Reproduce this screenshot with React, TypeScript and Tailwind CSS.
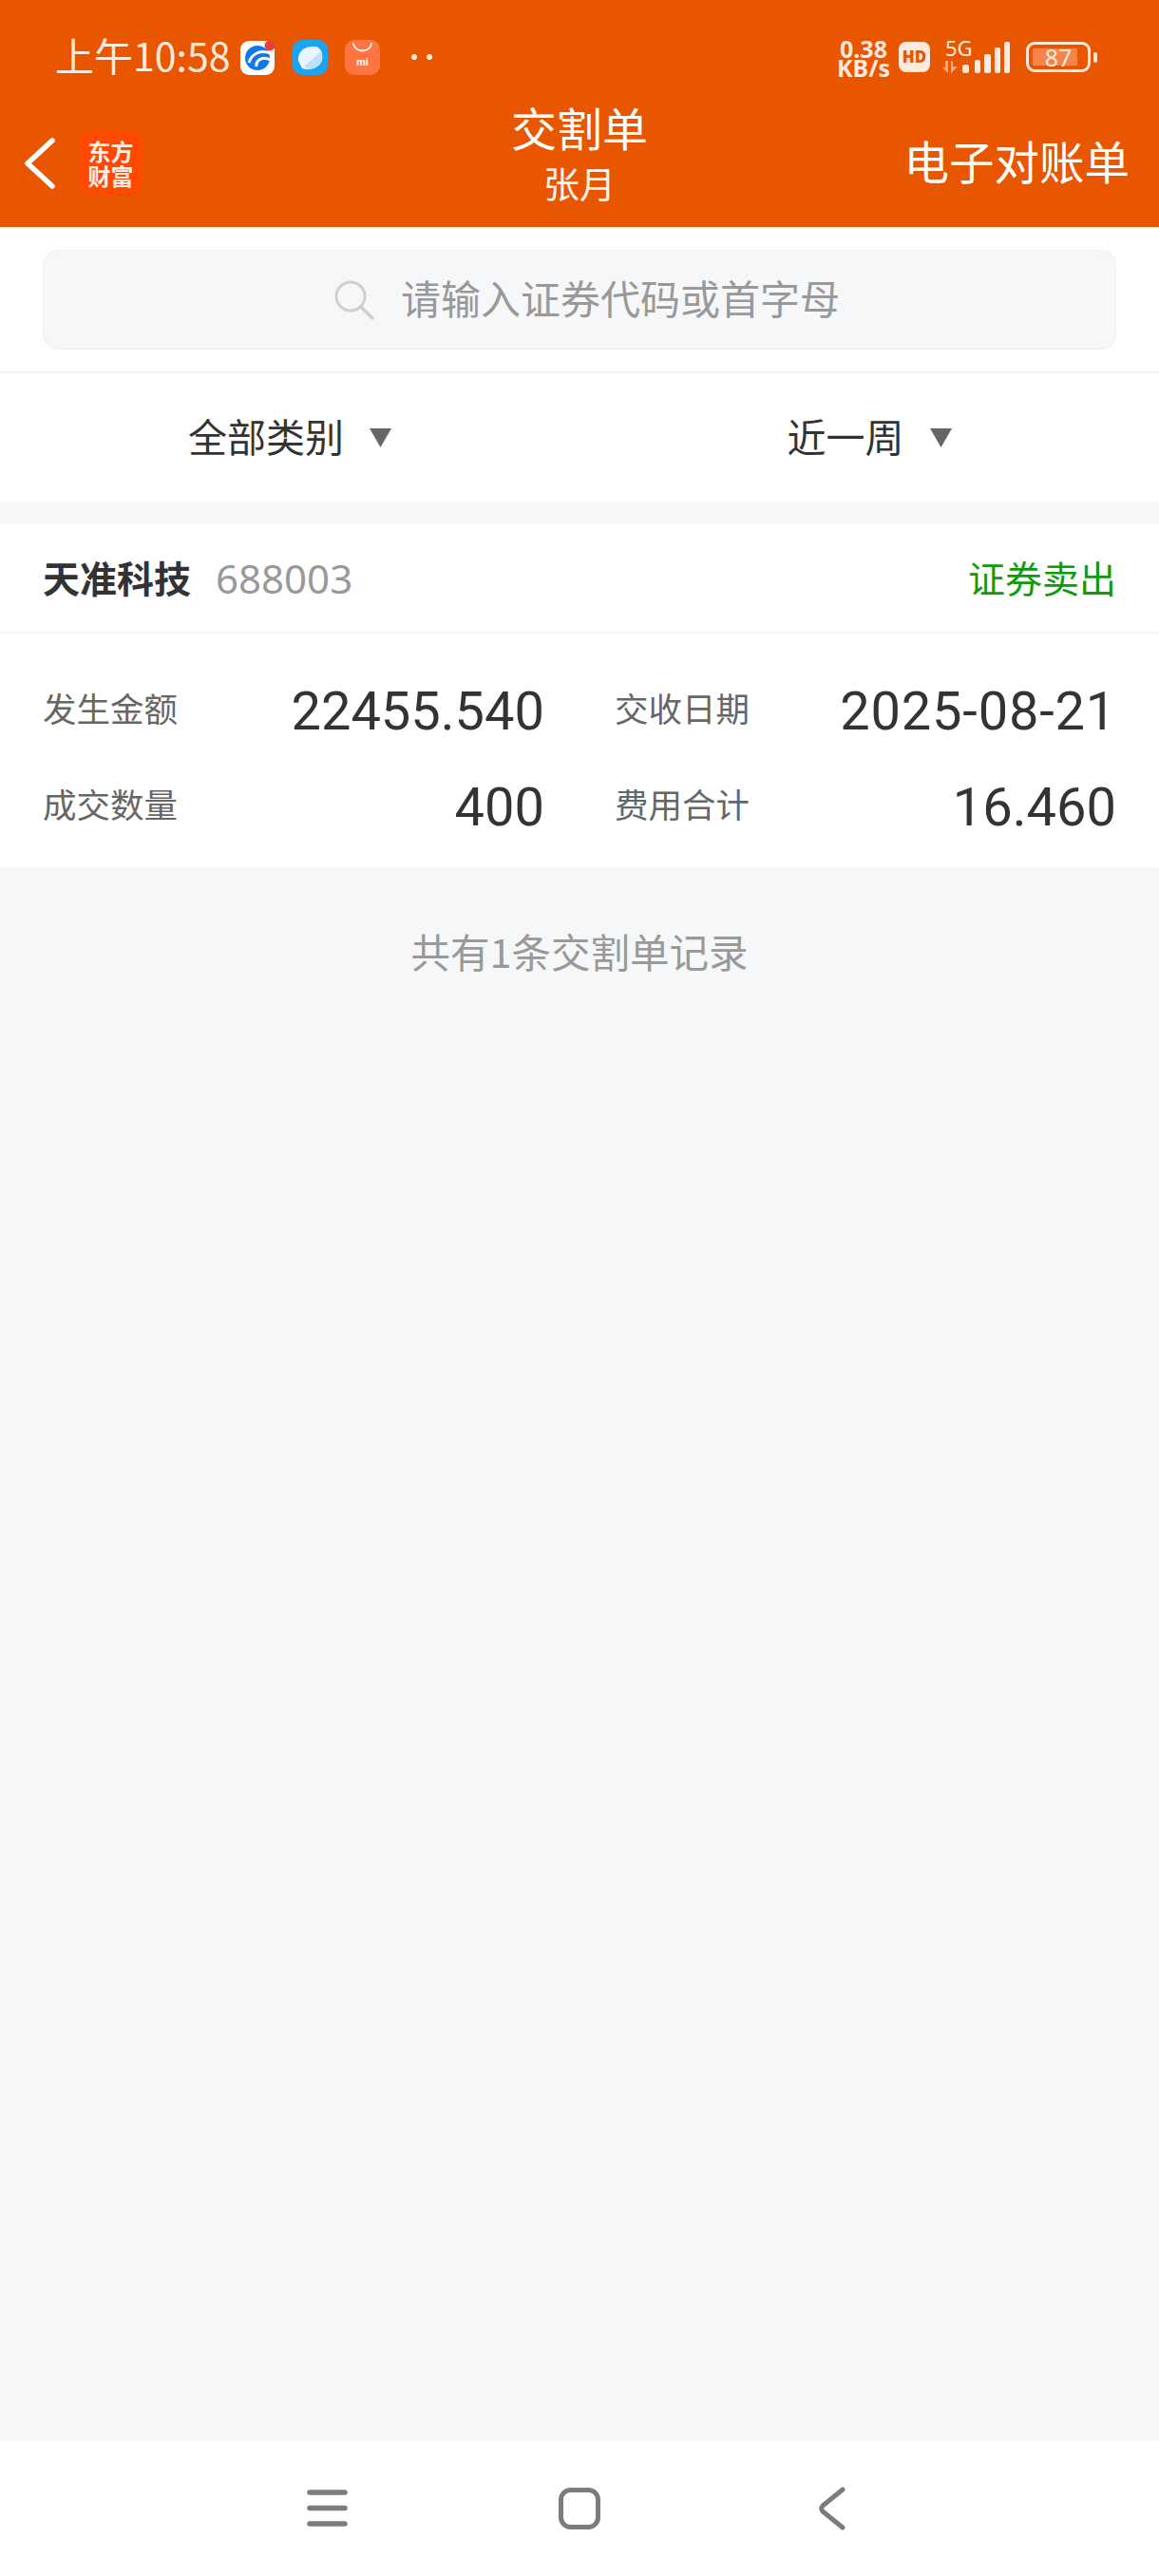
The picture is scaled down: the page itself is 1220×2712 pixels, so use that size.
function Row({ label, value, valueClass }: { label: string; value: string; valueClass?: string }) {
  return (
    <div className="flex items-center justify-between w-[528px] h-[64px]">
      <span className="text-[35.5px] leading-[48px] text-[#666666] mb-[6px]">{label}</span>
      <span className={"text-[56px] leading-[64px] mt-[2px] text-[#333333] font-['Roboto',sans-serif] " + (valueClass ?? "")}>{value}</span>
    </div>
  );
}

function StatusBar() {
  return (
    <div className="h-[118px] flex items-center justify-between pl-[58px] pr-[65px] pt-[2px] text-[#ffe9dc]">
      <div className="flex items-center">
        <span className="text-[41px] leading-[50px] mb-[6px] w-[186px] whitespace-nowrap">上午10:58</span>
        <svg width="38" height="37" viewBox="0 0 38 37" className="ml-[9px]">
          <rect width="36" height="36" y="1" rx="9" fill="#fff" />
          <circle cx="18" cy="19" r="13" fill="#1577e6" />
          <path d="M9 24C12 14 22 10 31 14M17 28C16 21 24 17 31 21" stroke="#fff" strokeWidth="3" fill="none" />
          <circle cx="31" cy="6" r="5.5" fill="#e5403a" />
        </svg>
        <svg width="37" height="37" viewBox="0 0 37 37" className="ml-[17px]">
          <rect width="37" height="37" rx="10" fill="#1ba4f4" />
          <path d="M6 22C5 12 13 6 24 7C30 8 32 14 31 21C29 29 19 33 10 30Z" fill="#eaf5ff" />
          <path d="M12 28L30 12C32 19 30 26 24 29C20 31 16 31 12 28Z" fill="#bfe0fa" />
        </svg>
        <svg width="37" height="37" viewBox="0 0 37 37" className="ml-[18px]">
          <rect width="37" height="37" rx="10" fill="#ff7442" />
          <path d="M9 4C11 14 26 14 28 4" stroke="#fff" strokeWidth="1.8" fill="none" strokeLinecap="round" />
          <text x="18.5" y="27" textAnchor="middle" fontSize="11" fontWeight="700" fill="#fff" fontFamily="Roboto, sans-serif">mi</text>
        </svg>
        <div className="ml-[33px] flex gap-[10px]">
          <span className="w-[6px] h-[6px] rounded-full bg-[#ffe9dc]" />
          <span className="w-[6px] h-[6px] rounded-full bg-[#ffe9dc]" />
        </div>
      </div>
      <div className="flex items-center">
        <div className="flex flex-col items-center w-[54px] text-[25px] leading-[20px] font-bold font-['Noto_Sans',sans-serif] mt-[2px]">
          <span>0.38</span>
          <span>KB/s</span>
        </div>
        <span className="ml-[10px] w-[33px] h-[32px] rounded-[8px] bg-[#ffe9dc] text-[#e85600] text-[17px] font-black leading-[32px] text-center font-['Noto_Sans',sans-serif]">HD</span>
        <div className="ml-[13px] relative w-[72px] h-[34px]">
          <span className="absolute left-[3px] -top-[6px] text-[22px] leading-[26px] font-['Noto_Sans',sans-serif]">5G</span>
          <svg width="16" height="13" viewBox="0 0 16 13" className="absolute left-0 bottom-0">
            <path d="M6 0V13L0 7H3V0ZM9 0H11V6H16L9 13Z" fill="#f7a77c" />
          </svg>
          <svg width="51" height="33" viewBox="0 0 51 33" className="absolute left-[21px] bottom-0">
            <rect x="0" y="24" width="7" height="9" rx="2.5" fill="#ffe9dc" />
            <rect x="13" y="19" width="6" height="14" rx="2" fill="#ffe9dc" />
            <rect x="23" y="13" width="7" height="20" rx="2" fill="#ffe9dc" />
            <rect x="34" y="6" width="6" height="27" rx="2" fill="#ffe9dc" />
            <rect x="44" y="0" width="6" height="33" rx="2" fill="#ffe9dc" />
          </svg>
        </div>
        <div className="ml-[16px] relative w-[68px] h-[32px] border-[3px] border-[#ffe9dc] rounded-[9px] p-[4px]">
          <div className="w-[47px] h-full bg-[#f4834c] rounded-[1px]" />
          <span className="absolute inset-0 text-center text-[25px] leading-[26px] font-['Noto_Sans',sans-serif]">87</span>
        </div>
        <span className="ml-[3px] w-[4px] h-[11px] rounded-full bg-[#ffe9dc]" />
      </div>
    </div>
  );
}

function Caret() {
  return (
    <svg width="23" height="20" viewBox="0 0 23 20" className="ml-[27px]">
      <path d="M0 0H23L11.5 20Z" fill="#666666" />
    </svg>
  );
}

export default function App() {
  return (
    <div className="w-[1220px] h-[2712px] flex flex-col bg-[#f6f7f9] overflow-hidden font-['Noto_Sans_CJK_SC','Noto_Sans',sans-serif]">
      <header className="bg-[#e85600] h-[239px] shrink-0 text-white">
        <StatusBar />
        <div className="h-[121px] grid grid-cols-[1fr_auto_1fr] items-center pl-[24px] pr-[31px] pb-[14px]">
          <div className="flex items-center">
            <svg width="36" height="58" viewBox="0 0 36 58">
              <path d="M31 5L5 29L31 53" fill="none" stroke="#fff" strokeWidth="5.5" strokeLinecap="round" strokeLinejoin="round" />
            </svg>
            <div className="ml-[23px] w-[67px] h-[67px] rounded-[14px] bg-[#ff4800] flex flex-col items-center justify-center text-[24px] leading-[26px] font-bold text-[#ffeee6]">
              <span>东方</span>
              <span>财富</span>
            </div>
          </div>
          <div className="flex flex-col items-center self-start -mt-[13px] ml-[7px]">
            <span className="text-[48px] leading-[56px]">交割单</span>
            <span className="text-[38px] leading-[46px] mt-[8px] text-[#fff3ec]">张月</span>
          </div>
          <span className="justify-self-end text-[47.5px] leading-[60px] mb-[6px] whitespace-nowrap">电子对账单</span>
        </div>
      </header>

      <div className="bg-white h-[154px] shrink-0 px-[45px] pt-[24px] border-b-2 border-[#f0f0f0]">
        <div className="h-[105px] rounded-[16px] bg-[#f6f7f9] border border-[#eeeff1] flex items-center pl-[306px]">
          <svg width="42" height="42" viewBox="0 0 42 42" className="mr-[28px]">
            <circle cx="17" cy="17" r="15" fill="none" stroke="#d0d0d0" strokeWidth="3" />
            <path d="M28 28L40 40" stroke="#d0d0d0" strokeWidth="3.5" strokeLinecap="round" />
          </svg>
          <span className="text-[42px] leading-[56px] mb-[6px] text-[#999999] whitespace-nowrap">请输入证券代码或首字母</span>
        </div>
      </div>

      <div className="bg-white h-[135px] shrink-0 flex items-center">
        <div className="w-[610px] flex items-center justify-center">
          <span className="text-[41px] leading-[56px] mb-[6px] text-[#333333]">全部类别</span>
          <Caret />
        </div>
        <div className="w-[610px] flex items-center justify-center">
          <span className="text-[41px] leading-[56px] mb-[6px] text-[#333333]">近一周</span>
          <Caret />
        </div>
      </div>

      <section className="mt-[24px] bg-white shrink-0">
        <div className="h-[115px] px-[45px] flex items-center justify-between border-b-2 border-[#f5f5f5]">
          <div className="flex items-center">
            <span className="text-[39px] leading-[52px] mb-[4px] font-bold text-[#333333]">天准科技</span>
            <span className="ml-[26px] text-[42px] leading-[52px] text-[#999999] font-['Noto_Sans',sans-serif]">688003</span>
          </div>
          <span className="text-[39px] leading-[52px] mb-[4px] text-[#0f9a0f]">证券卖出</span>
        </div>
        <div className="h-[246px] px-[45px] pt-[49px] flex flex-col gap-[37px]">
          <div className="flex justify-between">
            <Row label="发生金额" value="22455.540" />
            <Row label="交收日期" value="2025-08-21" valueClass="tracking-[0.8px]" />
          </div>
          <div className="flex justify-between">
            <Row label="成交数量" value="400" />
            <Row label="费用合计" value="16.460" />
          </div>
        </div>
      </section>

      <div className="flex-1 flex justify-center pt-[60px]">
        <span className="text-[41.5px] leading-[56px] text-[#999999]">共有1条交割单记录</span>
      </div>

      <footer className="bg-white h-[142px] shrink-0 flex items-center pl-[322px]">
        <svg width="44" height="44" viewBox="0 0 44 44">
          <path d="M4 5H41M4 21.5H41M4 38H41" stroke="#7c7c7c" strokeWidth="5.5" strokeLinecap="round" />
        </svg>
        <svg width="44" height="44" viewBox="0 0 44 44" className="ml-[222px]">
          <rect x="2.5" y="2.5" width="39" height="39" rx="10" fill="none" stroke="#7c7c7c" strokeWidth="5" />
        </svg>
        <svg width="30" height="46" viewBox="0 0 30 46" className="ml-[229px]">
          <path d="M26 3L5 20Q2.5 23 5 26L26 43" fill="none" stroke="#7c7c7c" strokeWidth="5" strokeLinecap="round" />
        </svg>
      </footer>
    </div>
  );
}
